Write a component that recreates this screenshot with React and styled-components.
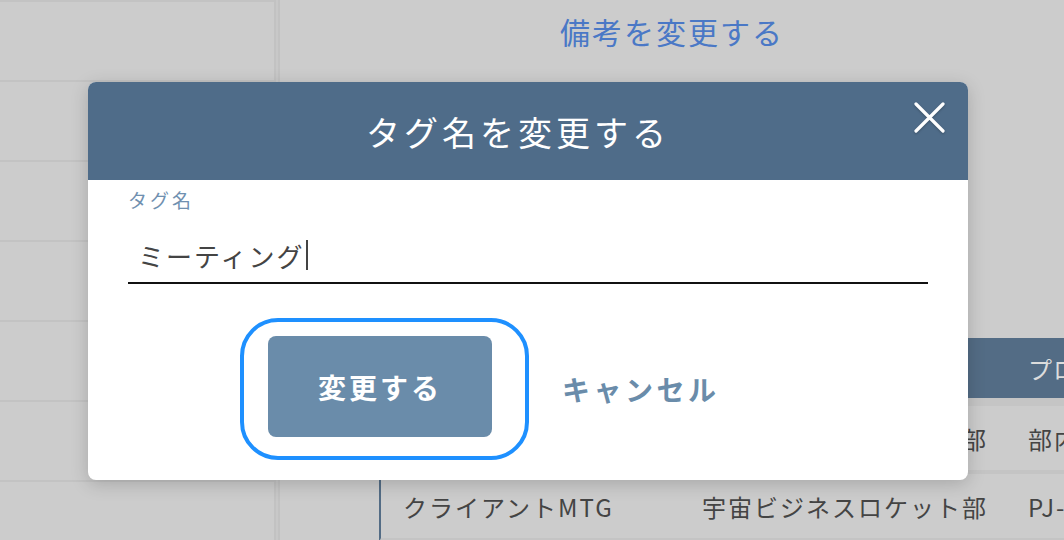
import React from "react";
import styled, { createGlobalStyle } from "styled-components";

const Global = createGlobalStyle`
  html, body { margin: 0; padding: 0; }
  body {
    width: 1064px; height: 540px; overflow: hidden;
    background: #cccccc;
    font-family: "Noto Sans CJK JP", "Noto Sans", sans-serif;
  }
`;

const Page = styled.div`
  position: relative;
  width: 1064px;
  height: 540px;
  display: flex;
  background: #cccccc;
  overflow: hidden;
`;

const SidePane = styled.div`
  width: 274px;
  flex-shrink: 0;
  display: flex;
  flex-direction: column;
  border-top: 2px solid #c3c3c3;
  box-sizing: border-box;
`;

const SideCell = styled.div`
  height: 80px;
  flex-shrink: 0;
  box-sizing: border-box;
  border-bottom: 2px solid #c3c3c3;
`;

const Divider = styled.div`
  width: 6px;
  flex-shrink: 0;
  box-sizing: border-box;
  border-left: 2px solid #c2c2c2;
  border-right: 2px solid #c2c2c2;
  background: #c8c8c8;
`;

const Main = styled.div`
  flex: 1;
  display: flex;
  flex-direction: column;
  min-width: 0;
`;

const TopLink = styled.div`
  text-align: center;
  padding-top: 10px;
  font-size: 30px;
  line-height: 42px;
  letter-spacing: 2px;
  color: #4a78c6;
`;

const Table = styled.div`
  margin-top: 286px;
  margin-left: 101px;
  width: 720px;
  display: flex;
  flex-direction: column;
`;

const HeaderRow = styled.div`
  height: 60px;
  display: grid;
  grid-template-columns: 299px 326px 1fr;
  align-items: center;
  background: #536c85;
  color: #dcdcdc;
  font-size: 24px;
  letter-spacing: 1px;
  border-bottom: 8px solid #c5c5c5;
`;

const BodyRow = styled.div`
  height: 64px;
  display: grid;
  grid-template-columns: 299px 326px 1fr;
  align-items: center;
  color: #444444;
  font-size: 24px;
  letter-spacing: 2px;
  border-left: 2px solid #536c85;
  border-bottom: 4px solid #c4c4c4;
  margin-left: -2px;
`;

const Cell = styled.div`
  padding-left: 22px;
  white-space: nowrap;
`;

const Modal = styled.div`
  position: absolute;
  left: 88px;
  top: 82px;
  width: 880px;
  height: 398px;
  background: #ffffff;
  border-radius: 8px;
  overflow: hidden;
  box-shadow: 0 4px 18px rgba(0, 0, 0, 0.18);
  display: flex;
  flex-direction: column;
`;

const ModalHeader = styled.div`
  position: relative;
  height: 98px;
  background: #4f6c89;
  display: flex;
  align-items: center;
  justify-content: center;
  padding-right: 20px;
  color: #ffffff;
  font-size: 34px;
  letter-spacing: 4px;
`;

const CloseButton = styled.button`
  position: absolute;
  right: 22px;
  top: 19px;
  width: 33px;
  height: 33px;
  padding: 0;
  border: none;
  background: transparent;
  display: flex;
  align-items: center;
  justify-content: center;
  filter: drop-shadow(0 1px 1px rgba(0,0,0,0.25));
`;

const ModalBody = styled.div`
  padding: 8px 40px 0 40px;
  display: flex;
  flex-direction: column;
`;

const Label = styled.div`
  font-size: 19px;
  line-height: 24px;
  letter-spacing: 3px;
  color: #7090b0;
`;

const InputField = styled.div`
  margin-top: 16px;
  height: 56px;
  box-sizing: border-box;
  border-bottom: 2px solid #111111;
  padding: 0 10px;
  display: flex;
  align-items: center;
  font-size: 26px;
  letter-spacing: 2px;
  color: #444444;
`;

const Caret = styled.span`
  display: inline-block;
  width: 2px;
  height: 30px;
  margin-left: 2px;
  background: #444444;
`;

const Actions = styled.div`
  margin-top: 34px;
  padding-left: 112px;
  display: flex;
  align-items: center;
`;

const FocusRing = styled.div`
  border: 4px solid #1e90ff;
  border-radius: 38px;
  padding: 14px 33px 19px 24px;
`;

const PrimaryButton = styled.button`
  width: 224px;
  height: 101px;
  border: none;
  border-radius: 8px;
  background: #6a8caa;
  color: #ffffff;
  font-family: inherit;
  font-size: 28px;
  font-weight: 700;
  letter-spacing: 3px;
  display: flex;
  align-items: center;
  justify-content: center;
`;

const TextButton = styled.button`
  margin-left: 33px;
  padding: 0;
  border: none;
  background: transparent;
  color: #6a8caa;
  font-family: inherit;
  font-size: 28px;
  font-weight: 700;
  letter-spacing: 3.5px;
`;

export default function App() {
  return (
    <>
      <Global />
      <Page>
        <SidePane>
          {Array.from({ length: 7 }).map((_, i) => (
            <SideCell key={i} />
          ))}
        </SidePane>
        <Divider />
        <Main>
          <TopLink>備考を変更する</TopLink>
          <Table>
            <HeaderRow>
              <Cell>タグ名</Cell>
              <Cell>部署</Cell>
              <Cell>プロジェクト</Cell>
            </HeaderRow>
            <BodyRow>
              <Cell>社内MTG</Cell>
              <Cell>宇宙ビジネスロケット部</Cell>
              <Cell>部内会議</Cell>
            </BodyRow>
            <BodyRow>
              <Cell>クライアントMTG</Cell>
              <Cell>宇宙ビジネスロケット部</Cell>
              <Cell>PJ-001</Cell>
            </BodyRow>
          </Table>
        </Main>

        <Modal>
          <ModalHeader>
            タグ名を変更する
            <CloseButton aria-label="閉じる">
              <svg width="31" height="31" viewBox="0 0 31 31">
                <path d="M2 2 L29 29 M29 2 L2 29" stroke="#ffffff" strokeWidth="3.2" strokeLinecap="round" />
              </svg>
            </CloseButton>
          </ModalHeader>
          <ModalBody>
            <Label>タグ名</Label>
            <InputField>
              ミーティング
              <Caret />
            </InputField>
            <Actions>
              <FocusRing>
                <PrimaryButton>変更する</PrimaryButton>
              </FocusRing>
              <TextButton>キャンセル</TextButton>
            </Actions>
          </ModalBody>
        </Modal>
      </Page>
    </>
  );
}
